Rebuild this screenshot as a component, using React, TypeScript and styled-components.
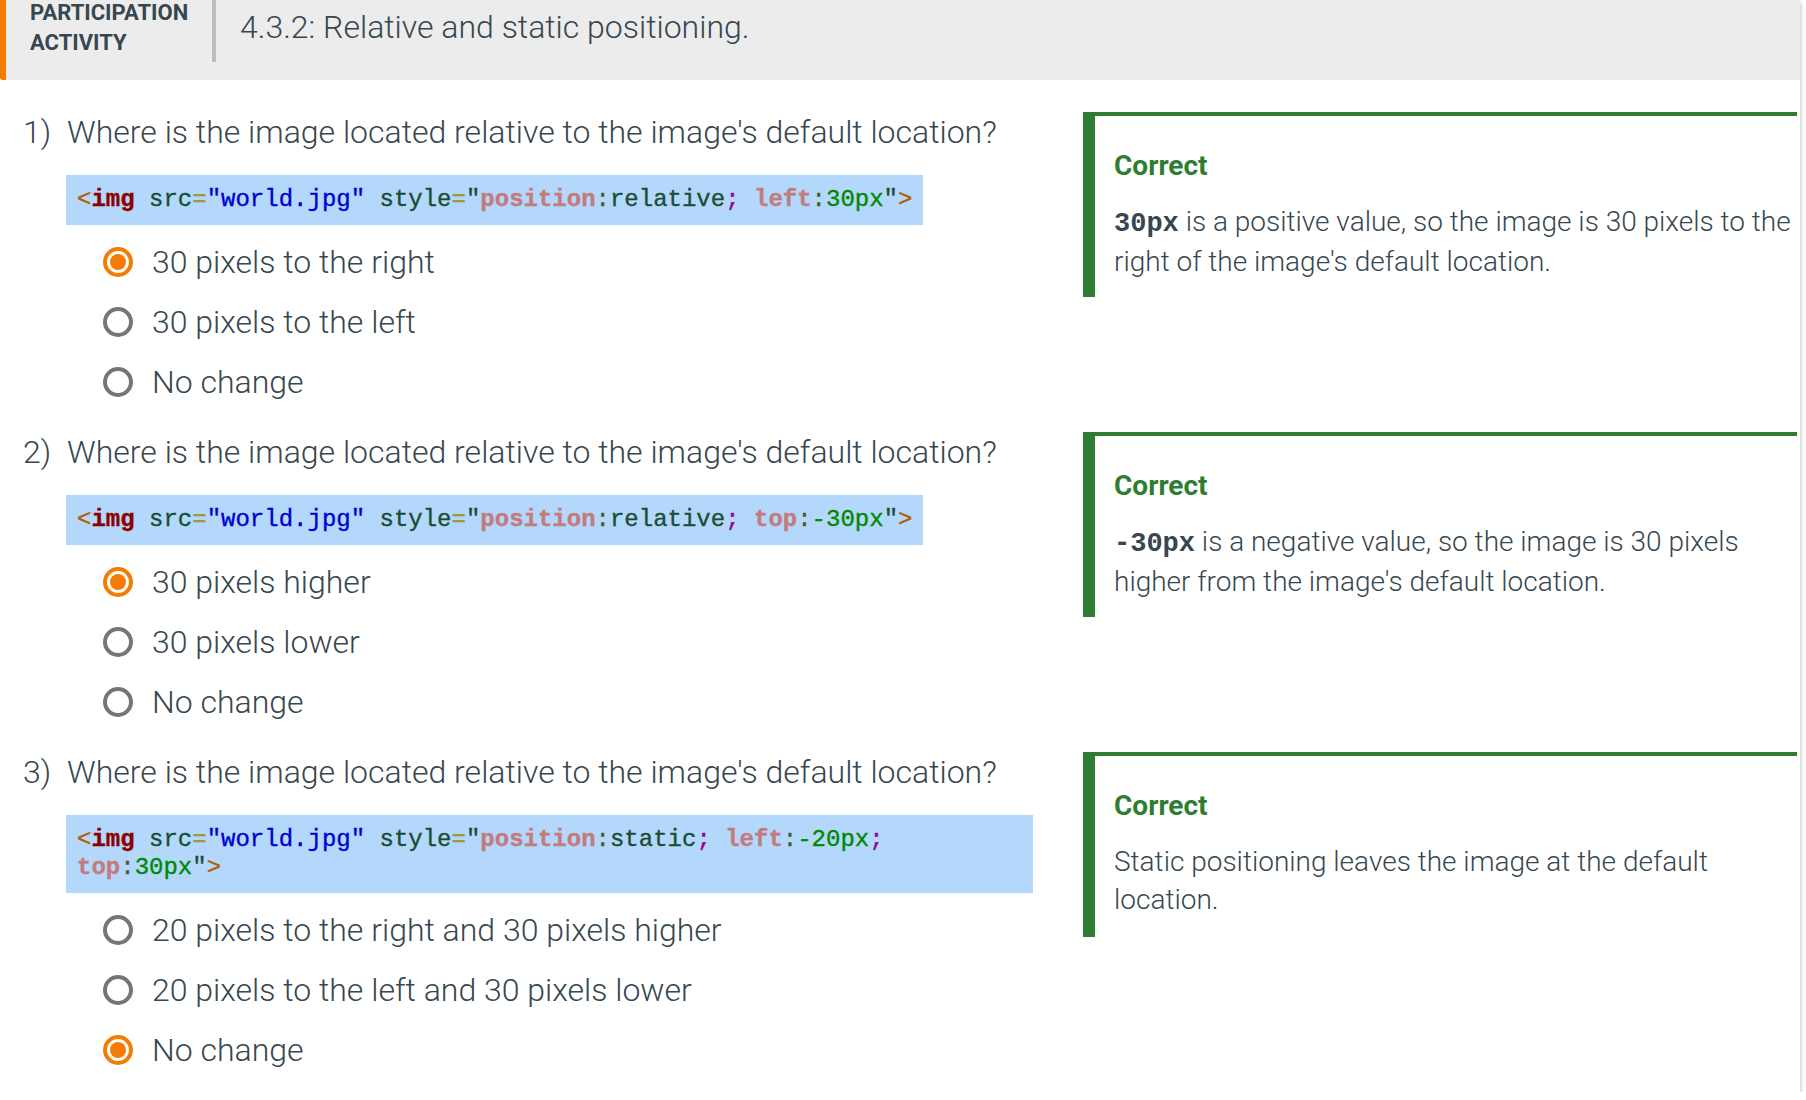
import styled, { createGlobalStyle } from 'styled-components';

const GlobalStyle = createGlobalStyle`
	body {
		margin: 0;
		background: #ffffff;
		font-family: Roboto, 'Liberation Sans', sans-serif;
		color: #37474f;
	}
`;

type TokenKind =
	| 'plain'
	| 'bracket'
	| 'tag'
	| 'attr'
	| 'eq'
	| 'str'
	| 'quote'
	| 'prop'
	| 'colon'
	| 'value'
	| 'semi'
	| 'num';

type Token = [TokenKind, string];

type Choice = { label: string; checked: boolean };

type Question = {
	id: number;
	prompt: string;
	code: Token[];
	choices: Choice[];
	explanation: { code?: string; text: string };
};

const tokenColors: Record<TokenKind, string> = {
	plain: '#1a4d33',
	bracket: '#b05e00',
	tag: '#8b0000',
	attr: '#1a4d33',
	eq: '#9c9a2e',
	str: '#0000d0',
	quote: '#1a4d33',
	prop: '#c27c7c',
	colon: '#4d5a24',
	value: '#1a4d33',
	semi: '#990099',
	num: '#008800',
};

const imgStart: Token[] = [
	['bracket', '<'],
	['tag', 'img'],
	['plain', ' '],
	['attr', 'src'],
	['eq', '='],
	['str', '"world.jpg"'],
	['plain', ' '],
	['attr', 'style'],
	['eq', '='],
	['quote', '"'],
	['prop', 'position'],
	['colon', ':'],
];

const imgEnd: Token[] = [
	['quote', '"'],
	['bracket', '>'],
];

const questions: Question[] = [
	{
		id: 1,
		prompt: "Where is the image located relative to the image's default location?",
		code: [
			...imgStart,
			['value', 'relative'],
			['semi', ';'],
			['plain', ' '],
			['prop', 'left'],
			['colon', ':'],
			['num', '30px'],
			...imgEnd,
		],
		choices: [
			{ label: '30 pixels to the right', checked: true },
			{ label: '30 pixels to the left', checked: false },
			{ label: 'No change', checked: false },
		],
		explanation: {
			code: '30px',
			text: " is a positive value, so the image is 30 pixels to the right of the image's default location.",
		},
	},
	{
		id: 2,
		prompt: "Where is the image located relative to the image's default location?",
		code: [
			...imgStart,
			['value', 'relative'],
			['semi', ';'],
			['plain', ' '],
			['prop', 'top'],
			['colon', ':'],
			['num', '-30px'],
			...imgEnd,
		],
		choices: [
			{ label: '30 pixels higher', checked: true },
			{ label: '30 pixels lower', checked: false },
			{ label: 'No change', checked: false },
		],
		explanation: {
			code: '-30px',
			text: " is a negative value, so the image is 30 pixels higher from the image's default location.",
		},
	},
	{
		id: 3,
		prompt: "Where is the image located relative to the image's default location?",
		code: [
			...imgStart,
			['value', 'static'],
			['semi', ';'],
			['plain', ' '],
			['prop', 'left'],
			['colon', ':'],
			['num', '-20px'],
			['semi', ';'],
			['plain', ' '],
			['prop', 'top'],
			['colon', ':'],
			['num', '30px'],
			...imgEnd,
		],
		choices: [
			{ label: '20 pixels to the right and 30 pixels higher', checked: false },
			{ label: '20 pixels to the left and 30 pixels lower', checked: false },
			{ label: 'No change', checked: true },
		],
		explanation: {
			text: 'Static positioning leaves the image at the default location.',
		},
	},
];

const Card = styled.div`
	width: 1800px;
	padding-bottom: 12px;
	background: #ffffff;
	box-shadow: 1px 2px 4px rgba(0, 0, 0, 0.22);
`;

const Header = styled.div`
	display: flex;
	align-items: flex-start;
	box-sizing: border-box;
	height: 80px;
	background: #ececec;
	border-left: 6px solid #f57c00;
	border-bottom-left-radius: 3px;
`;

const ActivityLabel = styled.div`
	flex: none;
	width: 158px;
	margin: -2px 0 0 24px;
	font-size: 22px;
	font-weight: 700;
	line-height: 30px;
	text-transform: uppercase;
	white-space: nowrap;
	color: #37474f;
`;

const Divider = styled.div`
	flex: none;
	width: 4px;
	height: 62px;
	margin-left: 24px;
	background: #bdbdbd;
`;

const Title = styled.h1`
	margin: 7px 0 0 24px;
	font-size: 32px;
	font-weight: 300;
	line-height: 40px;
	color: #37474f;
`;

const QuestionList = styled.div`
	display: flex;
	flex-direction: column;
	gap: 20px;
	padding: 32px 0 0 23px;
`;

const QuestionRow = styled.div`
	display: flex;
	align-items: flex-start;
	gap: 50px;
`;

const QuestionBody = styled.div`
	flex: none;
	width: 1010px;
`;

const Prompt = styled.div`
	display: flex;
	font-size: 32px;
	font-weight: 300;
	line-height: 40px;
`;

const PromptNumber = styled.span`
	flex: none;
	width: 44px;
`;

const Details = styled.div`
	padding-left: 43px;
`;

const CodeBlock = styled.code`
	display: block;
	width: fit-content;
	max-width: 100%;
	box-sizing: border-box;
	margin-top: 23px;
	padding: 11px;
	background: #b3d8fb;
	font-family: 'Liberation Mono', 'DejaVu Sans Mono', monospace;
	font-size: 24px;
	line-height: 28px;
	-webkit-text-stroke: 0.35px currentColor;
`;

const CodeToken = styled.span<{ $kind: TokenKind }>`
	color: ${(p) => tokenColors[p.$kind]};
	font-weight: ${(p) => (p.$kind === 'tag' || p.$kind === 'prop' ? 700 : 400)};
`;

const Choices = styled.div`
	margin-top: 7px;
`;

const ChoiceRow = styled.label`
	display: flex;
	align-items: center;
	height: 60px;
	font-size: 32px;
	font-weight: 300;
	cursor: pointer;
`;

const Radio = styled.span<{ $checked: boolean }>`
	flex: none;
	display: flex;
	align-items: center;
	justify-content: center;
	box-sizing: border-box;
	width: 30px;
	height: 30px;
	margin: 0 19px 0 37px;
	border-radius: 50%;
	border: 4px solid ${(p) => (p.$checked ? '#f57c00' : '#757575')};

	&::after {
		content: '';
		display: ${(p) => (p.$checked ? 'block' : 'none')};
		width: 16px;
		height: 16px;
		border-radius: 50%;
		background: #f57c00;
	}
`;

const Feedback = styled.div`
	flex: none;
	box-sizing: border-box;
	width: 714px;
	height: 185px;
	padding: 31px 0 18px 19px;
	border-left: 12px solid #2e7d32;
	border-top: 4px solid #2e7d32;
`;

const FeedbackTitle = styled.div`
	margin-bottom: 18px;
	font-size: 28px;
	font-weight: 700;
	line-height: 38px;
	color: #2e7d32;
`;

const FeedbackText = styled.div`
	font-size: 28px;
	font-weight: 300;
	line-height: 38px;
`;

const InlineCode = styled.code`
	font-family: 'Liberation Mono', 'DejaVu Sans Mono', monospace;
	font-size: 27px;
	font-weight: 700;
	color: #37474f;
`;

const App = () => {
	return (
		<>
			<GlobalStyle />
			<Card>
				<Header>
					<ActivityLabel>
						Participation
						<br />
						Activity
					</ActivityLabel>
					<Divider />
					<Title>4.3.2: Relative and static positioning.</Title>
				</Header>
				<QuestionList>
					{questions.map((question) => (
						<QuestionRow key={question.id}>
							<QuestionBody>
								<Prompt>
									<PromptNumber>{question.id})</PromptNumber>
									<span>{question.prompt}</span>
								</Prompt>
								<Details>
									<CodeBlock>
										{question.code.map(([kind, text], index) => (
											<CodeToken key={index} $kind={kind}>
												{text}
											</CodeToken>
										))}
									</CodeBlock>
									<Choices>
										{question.choices.map((choice) => (
											<ChoiceRow key={choice.label}>
												<Radio $checked={choice.checked} />
												{choice.label}
											</ChoiceRow>
										))}
									</Choices>
								</Details>
							</QuestionBody>
							<Feedback>
								<FeedbackTitle>Correct</FeedbackTitle>
								<FeedbackText>
									{question.explanation.code && (
										<InlineCode>{question.explanation.code}</InlineCode>
									)}
									{question.explanation.text}
								</FeedbackText>
							</Feedback>
						</QuestionRow>
					))}
				</QuestionList>
			</Card>
		</>
	);
};

export default App;
